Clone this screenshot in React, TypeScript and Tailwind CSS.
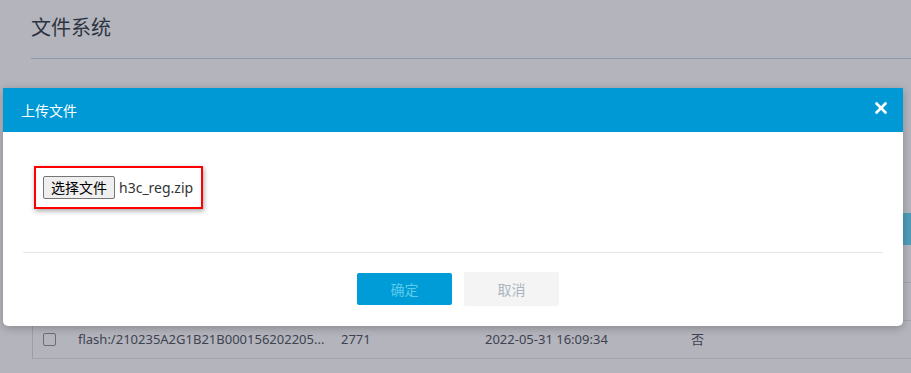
import { X } from "lucide-react";

const font = { fontFamily: '"Noto Sans", "Noto Sans CJK SC", sans-serif' };

const rows = [
  { name: "", size: "", time: "", flag: "" },
  { name: "", size: "", time: "", flag: "" },
  { name: "flash:/210235A2G1B21B000156202205...", size: "2771", time: "2022-05-31 16:09:34", flag: "否" },
];

function UploadModal() {
  return (
    <div className="absolute left-[3px] top-[88px] w-[900px] h-[238px] bg-white rounded-b-[5px] shadow-[0_2px_8px_rgba(0,0,0,0.25)] flex flex-col">
      <div className="h-[44px] bg-[#0099d6] flex items-center justify-between pl-[18px] pr-[13px]">
        <span className="text-white text-[14px]">上传文件</span>
        <X size={18} strokeWidth={3.5} className="text-white -mt-[4px]" />
      </div>
      <div className="flex-1 px-[20px]">
        <div className="h-[120px] pt-[34px] pl-[11px]">
          <div className="inline-flex items-center h-[43px] w-[169px] border-2 border-[#ff0000] shadow-[1px_2px_5px_rgba(0,0,0,0.35)] pl-[7px]">
            <button className="w-[72px] h-[23px] border border-[#767676] rounded-[2px] bg-[#efefef] text-[14px] text-black leading-none">
              选择文件
            </button>
            <span className="ml-[4px] text-[14px] text-[#333]">h3c_reg.zip</span>
          </div>
        </div>
        <div className="border-t border-[#e6e6e6]" />
        <div className="flex justify-center gap-[12px] pt-[20px] pl-[10px]">
          <button className="w-[95px] h-[32px] bg-[#009cd8] rounded-[2px] text-[14px] text-[#5ccbea]">确定</button>
          <button className="w-[95px] h-[34px] -mt-[1px] bg-[#f4f4f4] rounded-[2px] text-[14px] text-[#a9b6bf]">取消</button>
        </div>
      </div>
    </div>
  );
}

export default function App() {
  return (
    <div className="relative w-full h-[373px] overflow-hidden bg-[#b4b4bc]" style={font}>
      <div className="pl-[31px] pt-[14px]">
        <h1 className="text-[20px] text-[#2c3442] leading-[28px]">文件系统</h1>
        <div className="mt-[16px] border-t border-[#8c98a8]" />
        <div className="mt-[154px] ml-[1px] border-l border-[#9d9da6]">
          <div className="h-[32px] bg-[#4f9cb8]" />
          {rows.map((r, i) => (
            <div key={i} className="h-[38px] flex items-center border-b border-[#a3a3ac] text-[13px] text-[#3d4350]">
              <span className="ml-[10px] w-[13px] h-[13px] border border-[#6a6e78] rounded-[2px]" />
              <span className="ml-[22px] w-[263px] truncate">{r.name}</span>
              <span className="w-[144px]">{r.size}</span>
              <span className="w-[206px]">{r.time}</span>
              <span>{r.flag}</span>
            </div>
          ))}
        </div>
      </div>
      <UploadModal />
    </div>
  );
}
